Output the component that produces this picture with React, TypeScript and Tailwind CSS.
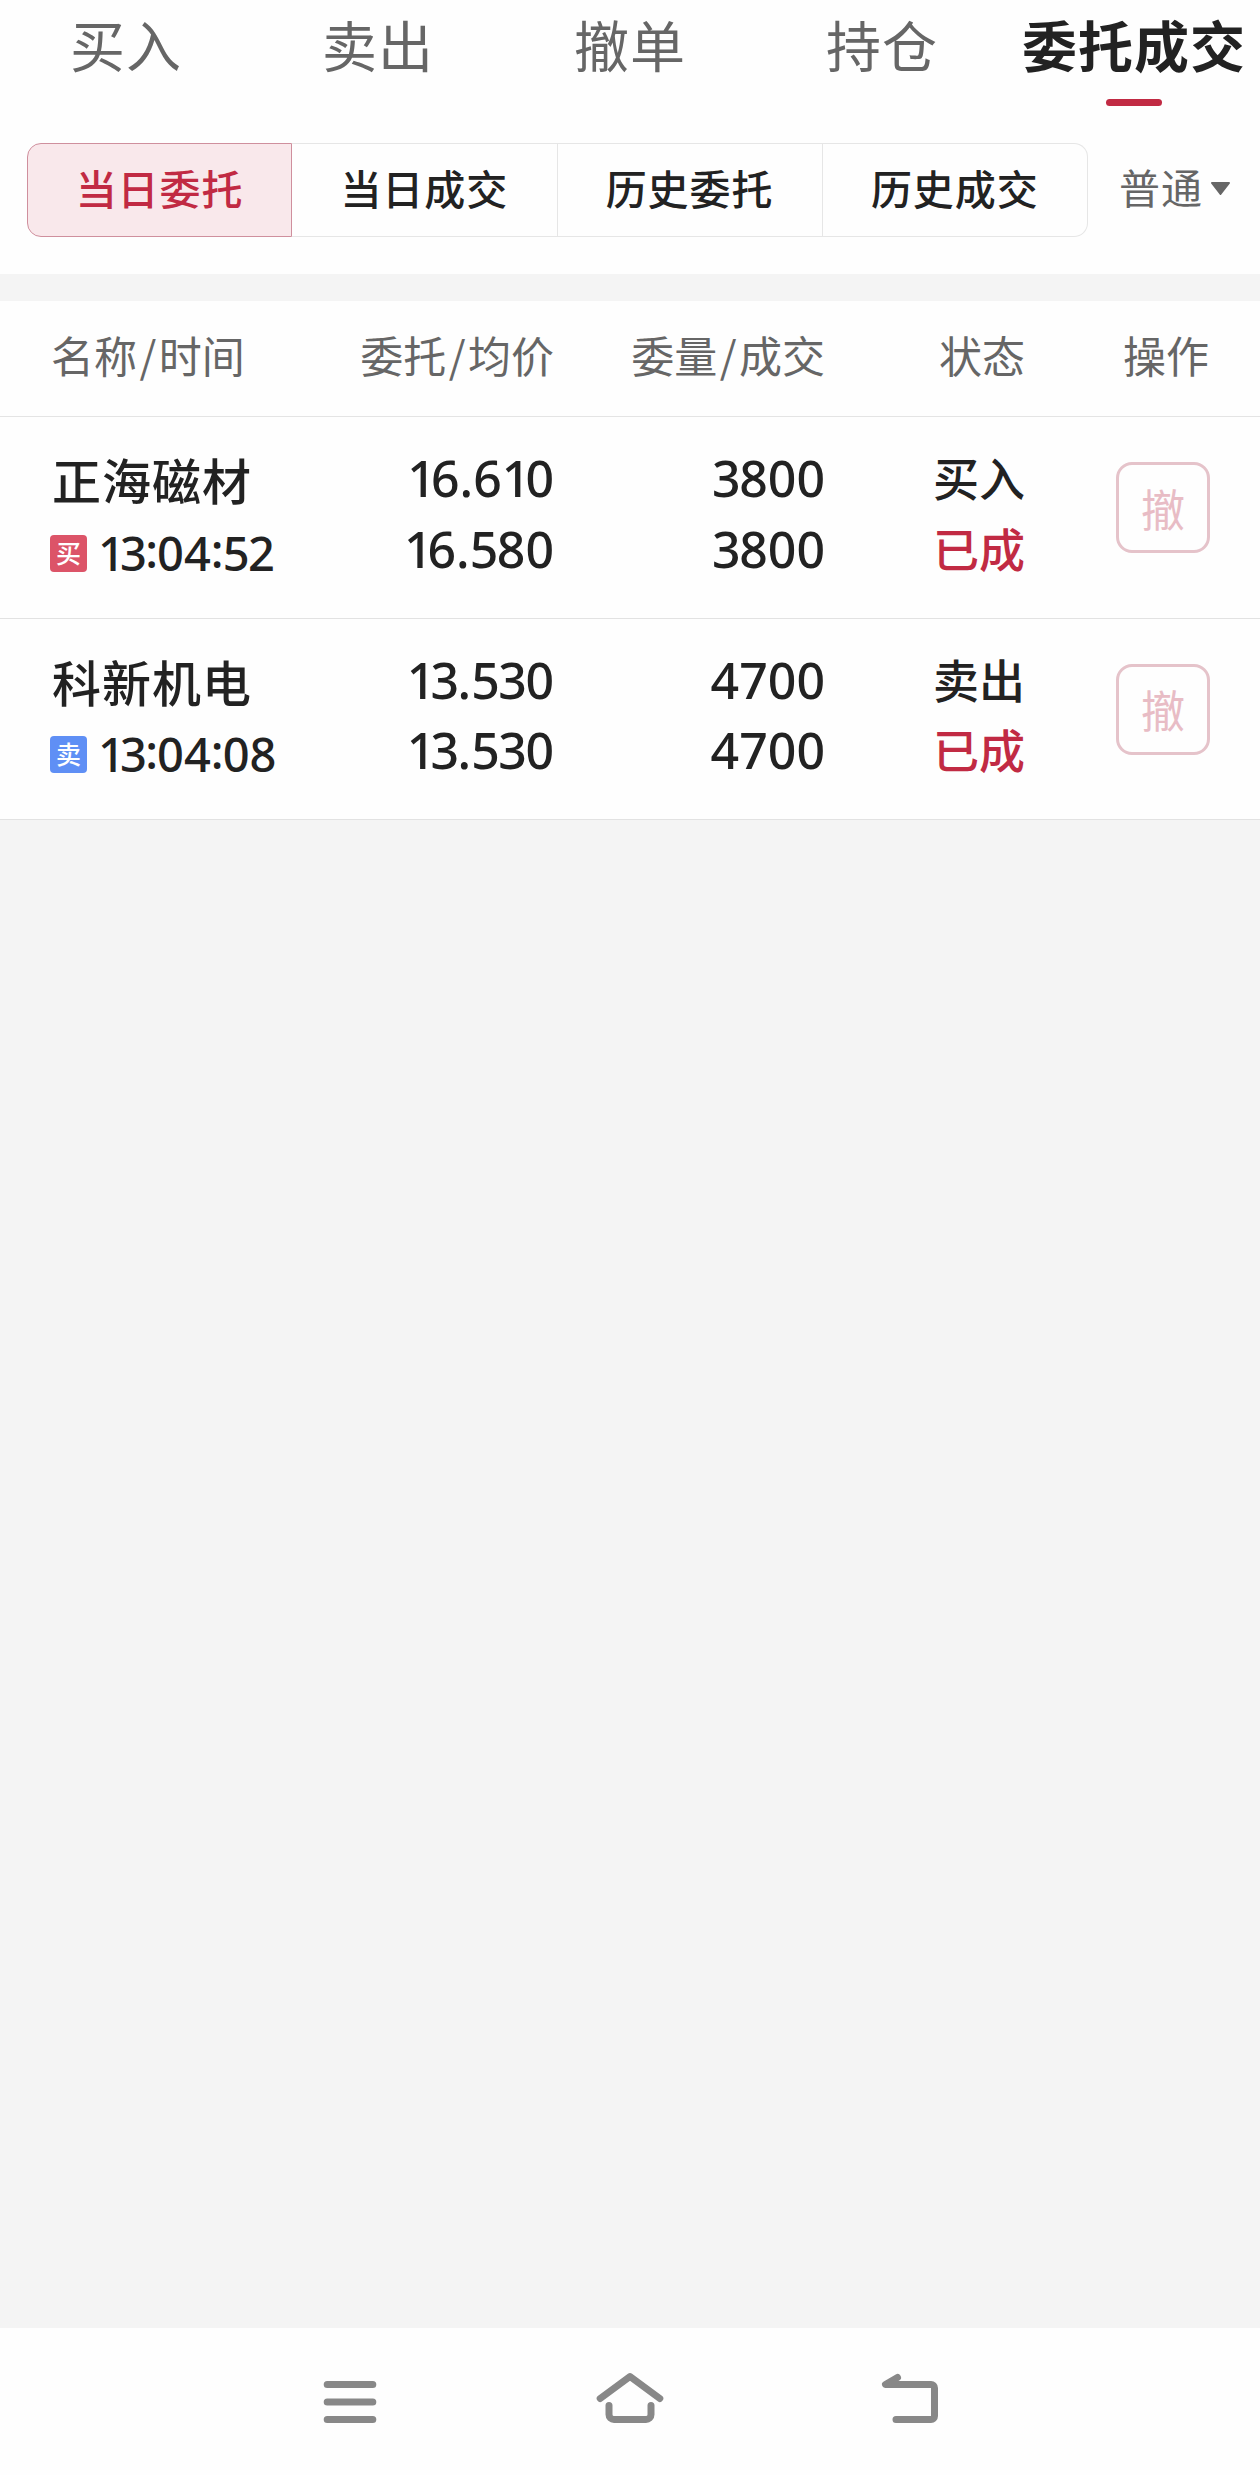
import clsx from "clsx";
import React from "react";

interface Order {
   name: string;
   time: string;
   side: "buy" | "sell";
   price: string;
   avgPrice: string;
   amount: string;
   dealt: string;
   status: string;
}

const tabs = ["买入", "卖出", "撤单", "持仓", "委托成交"];
const filters = ["当日委托", "当日成交", "历史委托", "历史成交"];
const headings = [
   ["名称", "时间"],
   ["委托", "均价"],
   ["委量", "成交"],
   ["状态"],
   ["操作"],
];

const orders: Order[] = [
   {
      name: "正海磁材",
      time: "13:04:52",
      side: "buy",
      price: "16.610",
      avgPrice: "16.580",
      amount: "3800",
      dealt: "3800",
      status: "已成",
   },
   {
      name: "科新机电",
      time: "13:04:08",
      side: "sell",
      price: "13.530",
      avgPrice: "13.530",
      amount: "4700",
      dealt: "4700",
      status: "已成",
   },
];

// narrow figures, so that the numbers are set proportionally
const figureClass: Record<string, string> = {
   "1": "tracking-[-5px]",
   "2": "tracking-[-1px]",
   "3": "tracking-[-1.5px]",
   "5": "tracking-[-1.5px]",
   ":": "relative -top-[3px] tracking-[-1px]",
};

const Digits: React.FC<{ value: string }> = ({ value }) => (
   <>
      {value.split(/([1235:])/).map((part, i) =>
         figureClass[part] ? (
            <span key={i} className={figureClass[part]}>
               {part}
            </span>
         ) : (
            part
         )
      )}
   </>
);

const Tabs = () => (
   <nav className="grid h-[143px] grid-cols-5 text-[55px] leading-[80px] tracking-[1px] text-[#666]">
      {tabs.map((tab, i) => (
         <div
            key={tab}
            className={clsx(
               "flex flex-col items-center whitespace-nowrap pt-[3px]",
               i === 4 && "font-bold text-[#222]"
            )}
         >
            {tab}
            {i === 4 && (
               <span className="mt-[16px] h-[7px] w-[56px] rounded-full bg-[#c12a43]" />
            )}
         </div>
      ))}
   </nav>
);

const Filters = () => (
   <div className="flex h-[131px] items-start pl-[27px]">
      <div className="grid h-[94px] w-[1061px] grid-cols-4 text-[41px] font-medium leading-[86px] tracking-[1px] text-[#222]">
         {filters.map((filter, i) => (
            <div
               key={filter}
               className={clsx(
                  "border text-center",
                  i === 0
                     ? "rounded-l-[14px] border-[#cf8f9d] bg-[#f9e8eb] text-[#c12a43]"
                     : "border-l-0 border-[#e6e6e6]",
                  i === 3 && "rounded-r-[14px]"
               )}
            >
               {filter}
            </div>
         ))}
      </div>
      <div className="ml-[31px] flex items-center text-[41px] leading-[87px] tracking-[1px] text-[#666]">
         普通
         <svg className="ml-[7px] mt-[4px] h-[13px] w-[21px]" viewBox="0 0 21 13">
            <path
               d="M2 1h17L10.500 12z"
               fill="#666"
               stroke="#666"
               strokeWidth="2"
               strokeLinejoin="round"
            />
         </svg>
      </div>
   </div>
);

const columns =
   "grid grid-cols-[230px_272px_271px_200px_185px] pl-[52px] text-right";

const numberCell = "pt-[2px] font-['Noto_Sans'] text-[50px] font-medium";

const OrderRow: React.FC<{ order: Order }> = ({ order }) => (
   <div
      className={`${columns} h-[201.5px] border-b border-[#e2e2e2] pt-[24px] text-[46px] leading-[70.5px] text-[#222]`}
   >
      <div className="whitespace-nowrap text-left">
         <p className="mt-[3px] text-[49px] font-medium tracking-[1px]">
            {order.name}
         </p>
         <div className="-ml-[2px] mt-[2px] flex items-center">
            <span
               className={clsx(
                  "mr-[11px] mt-[2px] h-[37px] w-[37px] rounded-[4px] text-center text-[25px] font-medium leading-[35px] text-white",
                  order.side === "buy" ? "bg-[#dc5468]" : "bg-[#5f8ff5]"
               )}
            >
               {order.side === "buy" ? "买" : "卖"}
            </span>
            <span className="mt-px font-['Noto_Sans'] text-[47px] font-medium">
               <Digits value={order.time} />
            </span>
         </div>
      </div>
      <div className={numberCell}>
         <p>
            <Digits value={order.price} />
         </p>
         <p>
            <Digits value={order.avgPrice} />
         </p>
      </div>
      <div className={numberCell}>
         <p>
            <Digits value={order.amount} />
         </p>
         <p>
            <Digits value={order.dealt} />
         </p>
      </div>
      <div className="font-medium">
         <p>{order.side === "buy" ? "买入" : "卖出"}</p>
         <p className="text-[#c12a43]">{order.status}</p>
      </div>
      <div className="flex justify-end pt-[21px]">
         <button className="h-[91px] w-[94px] rounded-[16px] border-[3px] border-[#e5c3ca] text-[44px] leading-[82px] text-[#e8bcc5]">
            撤
         </button>
      </div>
   </div>
);

const SystemBar = () => (
   <footer className="flex h-[147px] items-start bg-[#fefefe] pl-[320px] pt-[42px]">
      <svg
         className="h-[56px] w-[624px]"
         viewBox="320 2370 624 56"
         fill="none"
         stroke="#888"
         strokeWidth="7"
         strokeLinecap="round"
         strokeLinejoin="round"
      >
         <path d="M327.200 2384.500h45.600M327.200 2402h45.600M327.200 2419.500h45.600" />
         <path d="M600.200 2398.500L630 2376.500L659.800 2398.500" />
         <path d="M609 2405.500v9a5 5 0 0 0 5 5h32a5 5 0 0 0 5-5v-9" />
         <path d="M897.500 2377.500L885.500 2384.500H931a3.500 3.500 0 0 1 3.500 3.500v28a3.500 3.500 0 0 1-3.500 3.500H896" />
      </svg>
   </footer>
);

export default function App() {
   return (
      <div className="flex h-[2475px] w-[1260px] flex-col overflow-hidden bg-[#f4f4f4] font-['Noto_Sans_CJK_SC',sans-serif]">
         <div className="bg-[#fefefe]">
            <Tabs />
            <Filters />
         </div>
         <div className="mt-[27px] bg-[#fefefe]">
            <div
               className={`${columns} h-[116px] border-b border-[#e4e4e4] text-[43px] leading-[107px] text-[#666]`}
            >
               {headings.map(([first, second], i) => (
                  <div
                     key={first}
                     className={clsx(
                        "whitespace-nowrap",
                        i === 0 && "-ml-[1px] text-left",
                        i === 4 && "pr-[1px]"
                     )}
                  >
                     {first}
                     {second && <span className="mx-[2.5px]">/</span>}
                     {second}
                  </div>
               ))}
            </div>
            {orders.map((order) => (
               <OrderRow key={order.name} order={order} />
            ))}
         </div>
         <div className="flex-1" />
         <SystemBar />
      </div>
   );
}
